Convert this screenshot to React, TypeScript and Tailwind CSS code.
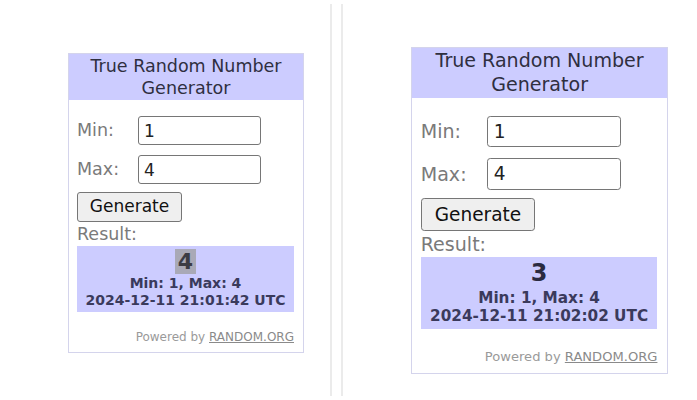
import React from "react";

interface WidgetProps {
  value: string;
  time: string;
  selected?: boolean;
  className?: string;
}

const Field: React.FC<{ label: string; value: string; className?: string }> = ({ label, value, className }) => (
  <div className={`flex items-center h-[29px] ${className ?? ""}`}>
    <span className="w-[61px] text-[17.5px] text-[#7a7a7a]">{label}</span>
    <input
      readOnly
      value={value}
      className="w-[123px] h-[29px] border border-[#767676] rounded-[3px] bg-white pl-[5px] text-[17px] text-[#222] outline-none font-['DejaVu_Sans',sans-serif]"
    />
  </div>
);

function Widget({ value, time, selected, className }: WidgetProps) {
  return (
    <div className={`w-[236px] border border-[#d4d4ec] bg-white font-['DejaVu_Sans',sans-serif] ${className ?? ""}`}>
      <div className="h-[46px] bg-[#ccccff] flex flex-col items-center justify-center text-[17.5px] leading-[22px] text-[#2f2f3f]">
        <div>True Random Number</div>
        <div>Generator</div>
      </div>
      <div className="pl-[8px] pr-[9px] pt-[16px] pb-[7px]">
        <Field label="Min:" value="1" />
        <Field label="Max:" value="4" className="mt-[10px]" />
        <button className="mt-[8px] w-[105px] h-[30px] bg-[#efefef] border border-[#767676] rounded-[3px] text-[17px] text-[#111] font-['DejaVu_Sans',sans-serif]">
          Generate
        </button>
        <div className="h-[24px] leading-[25px] text-[17.5px] text-[#7a7a7a]">Result:</div>
        <div className="h-[66px] bg-[#ccccff] pt-[1px] flex flex-col items-center text-[#3a3a5c]">
          <div className="h-[28px] flex items-center">
            <span className={`px-[3px] leading-[25px] text-[22px] font-bold ${selected ? "bg-[#a9a9b6] text-[#3c3c44]" : "text-[#2a2a40]"}`}>
              {value}
            </span>
          </div>
          <div className="leading-[17px] text-[14px] font-bold">Min: 1, Max: 4</div>
          <div className="leading-[17px] text-[14px] font-bold">{time}</div>
        </div>
        <div className="mt-[17px] leading-[16px] text-[12px] text-right text-[#9a9a9a]">
          Powered by <span className="underline text-[#8a8a8a]">RANDOM.ORG</span>
        </div>
      </div>
    </div>
  );
}

export default function App() {
  return (
    <div className="w-[697px] h-[400px] bg-white flex overflow-hidden">
      <div className="w-[330px] shrink-0 pl-[68px] pt-[53px]">
        <Widget value="4" time="2024-12-11 21:01:42 UTC" selected />
      </div>
      <div className="w-[2px] shrink-0 my-[4px] bg-[#ebebeb]" />
      <div className="w-[9px] shrink-0" />
      <div className="w-[2px] shrink-0 my-[4px] bg-[#ebebeb]" />
      <div className="pl-[68px] pt-[47px]">
        <Widget value="3" time="2024-12-11 21:02:02 UTC" className="[zoom:1.09]" />
      </div>
    </div>
  );
}
